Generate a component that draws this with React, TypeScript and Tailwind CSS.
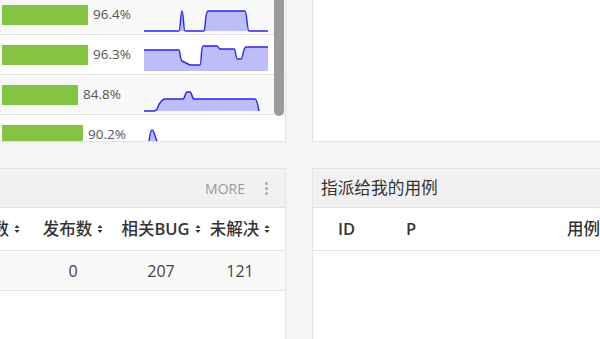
import React from "react";

type Row = {
  width: number;
  pct: string;
  line: string;
  fill: string;
};

// sparkline paths are in row-local coords (124 x 39)
const rows: Row[] = [
  {
    width: 86,
    pct: "96.4%",
    line: "M0 36 L35 36 C36.5 36 36.5 16 38 16 C39.5 16 39.5 36 41 36 L60 36 C61.5 36 61 16 64 16 L101 16 C103 16 103 36 105 36 L124 36",
    fill: "M0 36 L35 36 C36.5 36 36.5 16 38 16 C39.5 16 39.5 36 41 36 L60 36 C61.5 36 61 16 64 16 L101 16 C103 16 103 36 105 36 L124 36 Z",
  },
  {
    width: 86,
    pct: "96.3%",
    line: "M0 15 L35 15 C36 15 36 25 38 26 L46 30 L56 30 C57.5 30 57 11 59 11 L73 11 C74.5 11 74.5 14 76 14 L90 14 C92 14 91.5 24 93.5 24 L97 24 C99 24 99 12 102 12 L124 12",
    fill: "M0 15 L35 15 C36 15 36 25 38 26 L46 30 L56 30 C57.5 30 57 11 59 11 L73 11 C74.5 11 74.5 14 76 14 L90 14 C92 14 91.5 24 93.5 24 L97 24 C99 24 99 12 102 12 L124 12 L124 36 L0 36 Z",
  },
  {
    width: 76,
    pct: "84.8%",
    line: "M0 36 L10 36 C14 36 14 30 16 28 C18 25 19 24 21 24 L39 24 C41 24 41 17 43 17 L46 17 C48 17 48 24 50 24 L111 24 C113 24 114 30 115 36",
    fill: "M0 36 L10 36 C14 36 14 30 16 28 C18 25 19 24 21 24 L39 24 C41 24 41 17 43 17 L46 17 C48 17 48 24 50 24 L111 24 C113 24 114 30 115 36 Z",
  },
  {
    width: 81,
    pct: "90.2%",
    line: "M0 36 L3 36 C5 36 5 15 8 15 C10 15 11 22 13 26 C14 30 15 36 17 36 L124 36",
    fill: "M0 36 L3 36 C5 36 5 15 8 15 C10 15 11 22 13 26 C14 30 15 36 17 36 L124 36 Z",
  },
];

const SortIcon = () => (
  <svg width="6" height="10" viewBox="0 0 6 10" className="shrink-0">
    <path d="M0.5 4 L3 1 L5.5 4 Z" fill="#333" />
    <path d="M0.5 6 L3 9 L5.5 6 Z" fill="#333" />
  </svg>
);

const Th = ({ label, w, className }: { label: React.ReactNode; w: string; className?: string }) => (
  <div className={`${w} flex items-center gap-[5px] ${className ?? "justify-center"}`}>
    <span>{label}</span>
    <SortIcon />
  </div>
);

const PanelHeader = ({ children }: { children: React.ReactNode }) => (
  <div className="h-[39px] bg-[#f1f1f1] border-b border-[#e2e2e2] flex items-center">{children}</div>
);

export default function App() {
  return (
    <div
      className="w-[600px] h-[339px] overflow-hidden bg-[#f5f5f5] flex flex-col gap-[26px] text-[#333]"
      style={{ fontFamily: '"Open Sans", "Noto Sans CJK SC", sans-serif' }}
    >
      {/* top row */}
      <div className="flex gap-[26px] h-[142px] shrink-0">
        <div className="relative w-[286px] shrink-0 bg-white border-r border-b border-[#e3e3e3] overflow-hidden">
          <div className="-mt-[5px]">
            {rows.map((r, i) => (
              <div
                key={i}
                className={`h-[40px] flex items-center border-b border-[#e3e3e3] ${i % 2 === 0 ? "bg-[#f9f9f9]" : "bg-white"}`}
              >
                <div className="w-[144px] shrink-0 flex items-center gap-[5px] pl-[2px]">
                  <div className="h-[20px] bg-[#83c441]" style={{ width: r.width }} />
                  <span className="text-[13.5px] text-[#555]">{r.pct}</span>
                </div>
                <svg width="124" height="39" viewBox="0 0 124 39" className="shrink-0 self-start">
                  <path d={r.fill} fill="#bdbdf9" />
                  <path d={r.line} fill="none" stroke="#2626ef" strokeWidth="1.4" strokeLinejoin="round" />
                </svg>
              </div>
            ))}
          </div>
          <div className="absolute right-[1px] top-[-20px] w-[10px] h-[136px] rounded-full bg-[#9b9b9b]" />
        </div>
        <div className="flex-1 bg-white border-l border-b border-[#e3e3e3]" />
      </div>

      {/* bottom row */}
      <div className="flex gap-[26px] flex-1">
        <div className="w-[286px] shrink-0 bg-white border-t border-r border-[#e3e3e3]">
          <PanelHeader>
            <div className="flex-1" />
            <span className="text-[14px] text-[#999]">MORE</span>
            <div className="ml-[20px] mr-[17px] flex flex-col gap-[2px]">
              <div className="w-[3px] h-[3px] rounded-full bg-[#aaa]" />
              <div className="w-[3px] h-[3px] rounded-full bg-[#aaa]" />
              <div className="w-[3px] h-[3px] rounded-full bg-[#aaa]" />
            </div>
          </PanelHeader>
          <div className="h-[43px] flex items-center border-b border-[#e3e3e3] text-[16.5px] font-medium">
            <Th label="数" w="w-[30px]" className="justify-end pr-[10px] overflow-hidden" />
            <Th label="发布数" w="w-[86px]" />
            <Th label={<>相关<span className="font-semibold">BUG</span></>} w="w-[90px]" />
            <Th label="未解决" w="w-[68px]" />
          </div>
          <div className="h-[40px] flex items-center border-b border-[#e3e3e3] bg-[#f9f9f9] text-[16px] text-[#444]">
            <div className="w-[30px]" />
            <div className="w-[86px] text-center">0</div>
            <div className="w-[90px] text-center">207</div>
            <div className="w-[68px] text-center">121</div>
          </div>
        </div>
        <div className="flex-1 bg-white border-t border-l border-[#e3e3e3]">
          <PanelHeader>
            <span className="pl-[8px] text-[16.7px] text-[#333]">指派给我的用例</span>
          </PanelHeader>
          <div className="h-[43px] flex items-center border-b border-[#e3e3e3] text-[16.5px] font-medium whitespace-nowrap">
            <div className="w-[25px]" />
            <div className="w-[68px] font-semibold">ID</div>
            <div className="w-[161px] font-semibold">P</div>
            <div>用例</div>
          </div>
        </div>
      </div>
    </div>
  );
}
